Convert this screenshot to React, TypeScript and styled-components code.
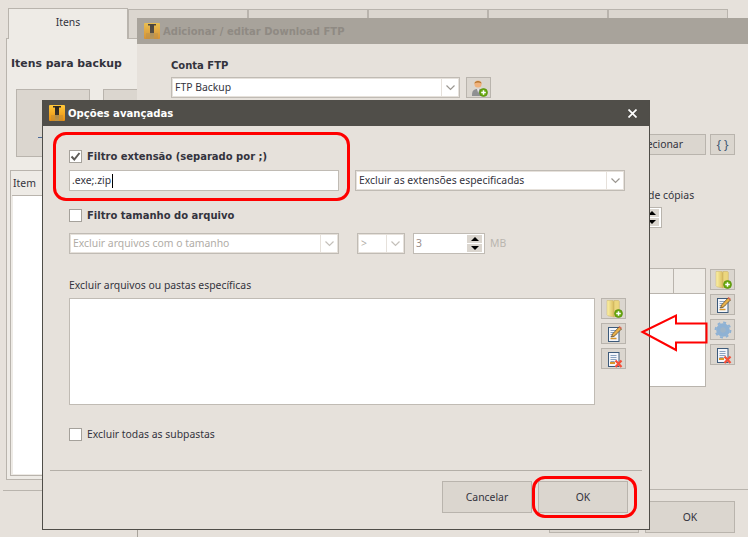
import styled, { createGlobalStyle } from "styled-components"

const GlobalStyle = createGlobalStyle`
html, body {
    margin: 0;
    padding: 0;
    background: #e6e1db;
    overflow: hidden;
}
* {
    box-sizing: border-box;
}
`

const border = "#b9b4ad"
const font = `"Noto Sans", sans-serif`
const boldFont = `"DejaVu Sans", sans-serif`
const textColor = "#33333d"

const AppIcon = ({ faded }: { faded?: boolean }) => (
    <svg width="16" height="16" viewBox="0 0 16 16" style={{ opacity: faded ? 0.75 : 1, flexShrink: 0 }}>
        <defs>
            <linearGradient id="appBg" x1="0" y1="0" x2="0" y2="1">
                <stop offset="0" stopColor="#ffc83a" />
                <stop offset="1" stopColor="#e88d10" />
            </linearGradient>
            <linearGradient id="appBar" x1="0" y1="0" x2="0" y2="1">
                <stop offset="0" stopColor="#2b2622" />
                <stop offset="0.55" stopColor="#3a332b" />
                <stop offset="0.6" stopColor="#a48a5c" />
                <stop offset="1" stopColor="#c49c4c" />
            </linearGradient>
        </defs>
        <rect width="16" height="16" rx="1" fill="url(#appBg)" />
        <rect x="4" y="1" width="8" height="1.5" fill="#2d2824" />
        <rect x="6" y="2" width="4" height="14" fill="url(#appBar)" />
        <rect x="2" y="10" width="12" height="6" fill="#b98a3a" opacity="0.45" />
    </svg>
)

const FolderAddIcon = () => (
    <svg width="18" height="18" viewBox="0 0 18 18">
        <defs>
            <linearGradient id="fold" x1="0" y1="0" x2="1" y2="0">
                <stop offset="0" stopColor="#fdf3a8" />
                <stop offset="1" stopColor="#d9bb5c" />
            </linearGradient>
        </defs>
        <path d="M2 0.5h6l1 1v15.5l-6-1.2-1-1z" fill="url(#fold)" stroke="#cdb66a" strokeWidth="0.5" />
        <path d="M9 0.5h4.5l0.8 1v13l-5.3 2.5z" fill="#ecd67e" stroke="#c7ad5f" strokeWidth="0.5" />
        <circle cx="13.5" cy="13.5" r="4" fill="#69a80f" stroke="#4f8a08" strokeWidth="0.6" />
        <path d="M13.5 11.2v4.6M11.2 13.5h4.6" stroke="#fff" strokeWidth="1.5" />
    </svg>
)

const DocLines = () => (
    <>
        <rect x="3.5" y="2.5" width="10.5" height="14" fill="#f4f6fa" stroke="#3d5a7a" />
        <path d="M5.5 5.5h6M5.5 7.500h6M5.5 9.500h6M5.5 11.500h4" stroke="#8aa2c0" />
    </>
)

const EditIcon = () => (
    <svg width="18" height="18" viewBox="0 0 18 18">
        <DocLines />
        <path d="M5.5 13.5h6" stroke="#d9962b" strokeWidth="1.5" />
        <path d="M6.500 12l1-3 6.500-7 2.500 2-7 7z" fill="#e8b04a" stroke="#5c4520" strokeWidth="0.7" />
        <path d="M14 1.500l2.500 2" stroke="#d86a5a" strokeWidth="1.6" />
    </svg>
)

const DeleteIcon = () => (
    <svg width="18" height="18" viewBox="0 0 18 18">
        <DocLines />
        <path d="M5 13h5" stroke="#d9962b" strokeWidth="2" />
        <path d="M10.500 10.500l6 6.500M16.500 10.500l-6 6.500" stroke="#f4503a" strokeWidth="2.2" />
    </svg>
)

const GearIcon = () => (
    <svg width="18" height="18" viewBox="0 0 18 18">
        <circle cx="9" cy="9" r="4.800" fill="#9db4c8" stroke="#8fb2d4" strokeWidth="4" />
        <circle cx="9" cy="9" r="7.400" fill="none" stroke="#8fb2d4" strokeWidth="2" strokeDasharray="2.900 2.900" />
    </svg>
)

const UserAddIcon = () => (
    <svg width="18" height="18" viewBox="0 0 18 18">
        <path d="M2 17c0-5 1-7 6-7s6 2 6 7z" fill="#8f9092" />
        <path d="M7 10h2.400l-1.200 4z" fill="#e8e8e8" />
        <circle cx="8" cy="5" r="3.600" fill="#f0b27c" />
        <path d="M4.500 4.500C4.500 1 11.500 1 11.500 4.500 9.500 3 6.500 3 4.500 4.500z" fill="#b4752f" />
        <circle cx="13.500" cy="13.500" r="4" fill="#69a80f" stroke="#4f8a08" strokeWidth="0.6" />
        <path d="M13.500 11.200v4.600M11.200 13.500h4.600" stroke="#fff" strokeWidth="1.5" />
    </svg>
)

const Chevron = ({ disabled }: { disabled?: boolean }) => (
    <svg width="9" height="6" viewBox="0 0 9 6">
        <path d="M0.500 0.500L4.500 4.500 8.500 0.500" fill="none" stroke={disabled ? "#c4c0ba" : "#9b9791"} strokeWidth="1.2" />
    </svg>
)

const Desktop = styled.div`
position: relative;
width: 748px;
height: 537px;
overflow: hidden;
background: #e6e1db;
font-family: ${font};
font-size: 10.4px;
line-height: 13px;
color: ${textColor};
`

/* janela principal, atras de tudo */
const MainWindow = styled.div`
position: absolute;
z-index: 0;
left: 0;
top: 0;
width: 748px;
height: 537px;
padding: 7px 0 0 6px;
`

const TabRow = styled.div`
display: flex;
align-items: flex-end;
height: 31px;
padding-left: 2px;
`

const Tab = styled.div<{ $active?: boolean }>`
width: 120px;
height: ${p => (p.$active ? 31 : 29)}px;
background: ${p => (p.$active ? "#eeebe6" : "#dbd6cf")};
border: 1px solid ${border};
border-bottom: none;
display: flex;
justify-content: center;
padding-top: 7px;
margin-bottom: ${p => (p.$active ? -1 : 0)}px;
position: relative;
z-index: ${p => (p.$active ? 1 : 0)};
`

const TabPane = styled.div`
width: 132px;
height: 442px;
background: #eeebe6;
border: 1px solid ${border};
padding: 18px 3px 0;
`

const PaneTitle = styled.div`
font-family: ${boldFont};
font-weight: bold;
font-size: 10.9px;
padding-left: 1px;
height: 15px;
`

const BigButtons = styled.div`
display: flex;
gap: 13px;
margin: 17px 0 0 6px;
`

const BigButton = styled.div`
width: 74px;
height: 68px;
flex-shrink: 0;
background: #dbd6cf;
border: 1px solid ${border};
`

const BigGlyph = styled.div`
width: 5px;
height: 1px;
margin: 47px 0 0 21px;
background: #4a6a9a;
`

const ItemTable = styled.div`
width: 120px;
height: 306px;
margin-top: 13px;
border: 1px solid ${border};
padding-left: 1px;
`

const ItemHead = styled.div`
height: 25px;
padding: 6px 1px;
border-bottom: 1px solid ${border};
`

const ItemBody = styled.div`
height: 278px;
background: #fff;
margin: 0 0 0 1px;
`

const MainFooterLine = styled.div`
width: 744px;
height: 1px;
margin: 10px 0 0 -3px;
background: ${border};
`

const FtpWindow = styled.div`
position: absolute;
z-index: 1;
left: 137px;
top: 18px;
width: 640px;
height: 530px;
background: #e6e1db;

&::before {
    content: "";
    position: absolute;
    left: 0;
    bottom: 0;
    width: 1px;
    height: 30px;
    background: #a8a39b;
}
`

const TitleBar = styled.div<{ $dark?: boolean }>`
height: 26px;
flex-shrink: 0;
display: flex;
align-items: center;
gap: 3px;
padding-left: ${p => (p.$dark ? 6 : 7)}px;
background: ${p => (p.$dark ? "#504e49" : "#a8a39b")};
color: ${p => (p.$dark ? "#fff" : "#8f8a83")};
font-family: ${boldFont};
font-weight: bold;
font-size: ${p => (p.$dark ? 10.1 : 10)}px;
position: relative;
`

const FtpBody = styled.div`
position: relative;
height: 504px;
padding: 15px 0 0 34px;
`

const FieldTitle = styled.div`
font-family: ${boldFont};
font-weight: bold;
font-size: 10px;
height: 13px;
margin-bottom: 5px;
`

const Row = styled.div<{ $gap?: number; $top?: number }>`
display: flex;
align-items: center;
gap: ${p => p.$gap ?? 6}px;
margin-top: ${p => p.$top ?? 0}px;
`

const Combo = styled.div<{ $w: number; $disabled?: boolean }>`
width: ${p => p.$w}px;
height: 21px;
flex-shrink: 0;
display: flex;
background: #fff;
border: 1px solid #c0bbb4;
outline: 1px solid #e6e1db;
outline-offset: -2px;
color: ${p => (p.$disabled ? "#b0aca6" : textColor)};
`

const ComboText = styled.div`
flex: 1;
display: flex;
align-items: center;
padding: 0 0 0 1px;
white-space: nowrap;
overflow: hidden;
margin: 2px 0 2px 2px;
background: #fff;
`

const ComboArrow = styled.div`
width: 18px;
display: flex;
align-items: center;
justify-content: center;
border-left: 1px solid #e6e1db;
`

const IconButton = styled.div`
width: 25px;
height: 21px;
flex-shrink: 0;
background: #dbd6cf;
border: 1px solid ${border};
display: flex;
align-items: center;
justify-content: center;
font-size: 12px;
color: #3e5873;
`

/* controles da direita que sobram atras do dialogo */
const RightColumn = styled.div`
position: absolute;
left: 573px;
top: 225px;
display: flex;
flex-direction: column;
gap: 4px;
`

const SelectRow = styled.div`
position: absolute;
left: 470px;
top: 90px;
display: flex;
gap: 4px;
`

const SelectButton = styled.div`
width: 99px;
height: 21px;
background: #dbd6cf;
border: 1px solid ${border};
display: flex;
align-items: center;
justify-content: flex-end;
padding: 0 22px 0 0;
`

const CopiesLabel = styled.div`
position: absolute;
left: 511px;
top: 145px;
white-space: nowrap;
`

const CopiesSpinner = styled.div`
position: absolute;
left: 499px;
top: 163px;
width: 26px;
height: 21px;
background: #fff;
border: 1px solid ${border};
display: flex;
justify-content: flex-end;
padding: 1px 2px 1px 0;
`

const SideTable = styled.div`
position: absolute;
left: 500px;
top: 224px;
width: 69px;
height: 119px;
border: 1px solid ${border};
background: #fff;
`

const SideTableHead = styled.div`
height: 25px;
background: #eeebe6;
border-bottom: 1px solid ${border};
display: flex;
justify-content: flex-end;
`

const SideHeadCell = styled.div`
width: 32px;
border-left: 1px solid ${border};
`

const FtpFooterLine = styled.div`
position: absolute;
left: 513px;
top: 445px;
right: 0;
height: 1px;
background: ${border};
`

const FtpButtons = styled.div`
position: absolute;
left: 412px;
top: 457px;
display: flex;
gap: 6px;
`

const PushButton = styled.div`
width: 90px;
height: 32px;
flex-shrink: 0;
background: #dbd6cf;
border: 1px solid ${border};
display: flex;
align-items: center;
justify-content: center;
`

/* dialogo "Opcoes avancadas" */
const Dialog = styled.div`
position: absolute;
z-index: 2;
left: 42px;
top: 100px;
width: 608px;
height: 430px;
background: #e6e1db;
border: 1px solid #4f4d48;
border-top: none;
display: flex;
flex-direction: column;
`

const CloseGlyph = styled.div`
position: absolute;
right: 12px;
top: 9px;
width: 9px;
height: 9px;
display: flex;
`

const DialogBody = styled.div`
flex: 1;
padding: 23px 0 0 26px;
display: flex;
flex-direction: column;
`

const CheckRow = styled.div<{ $bold?: boolean; $top?: number }>`
display: flex;
align-items: center;
gap: 5px;
height: 14px;
margin-top: ${p => p.$top ?? 0}px;
font-family: ${p => (p.$bold ? boldFont : font)};
font-size: ${p => (p.$bold ? 10 : 10.4)}px;
font-weight: ${p => (p.$bold ? "bold" : "normal")};
`

const CheckBox = styled.div`
width: 13px;
height: 13px;
flex-shrink: 0;
background: #fff;
border: 1px solid #a5a19b;
display: flex;
align-items: center;
justify-content: center;
`

const TextField = styled.div`
width: 270px;
height: 21px;
flex-shrink: 0;
background: #fff;
border: 1px solid #c0bbb4;
display: flex;
align-items: center;
padding: 0 0 0 2px;
`

const Caret = styled.span`
display: inline-block;
width: 1px;
height: 14px;
background: #000;
margin-left: 1px;
`

const SpinBox = styled.div`
width: 72px;
height: 21px;
flex-shrink: 0;
background: #fff;
border: 1px solid #c0bbb4;
display: flex;
align-items: center;
justify-content: space-between;
padding: 1px 2px 1px 2px;
color: #9a8e8a;
`

const SpinButtons = styled.div`
width: 15px;
height: 100%;
display: flex;
flex-direction: column;
gap: 1px;
`

const SpinStep = styled.div`
flex: 1;
background: #dbd6cf;
display: flex;
align-items: center;
justify-content: center;
`

const SpinTriangle = styled.div<{ $down?: boolean }>`
width: 0;
height: 0;
border-left: 4px solid transparent;
border-right: 4px solid transparent;
${p => (p.$down ? "border-top: 4px solid #000;" : "border-bottom: 4px solid #000;")}
`

const MutedLabel = styled.span`
color: #b9b5af;
`

const ListLabel = styled.div`
margin-top: 25px;
height: 13px;
`

const ListRow = styled.div`
display: flex;
gap: 6px;
margin-top: 6px;
`

const ListBox = styled.div`
width: 526px;
height: 107px;
background: #fff;
border: 1px solid #c0bbb4;
`

const ListButtons = styled.div`
display: flex;
flex-direction: column;
gap: 4px;
`

const DialogFooter = styled.div`
margin: 0 7px;
height: 59px;
border-top: 1px solid #b4afa8;
display: flex;
justify-content: flex-end;
gap: 6px;
padding: 10px 14px 0 0;
`

const Annotation = styled.div<{ $l: number; $t: number; $w: number; $h: number }>`
position: absolute;
z-index: 3;
left: ${p => p.$l}px;
top: ${p => p.$t}px;
width: ${p => p.$w}px;
height: ${p => p.$h}px;
border: 3px solid #f00;
border-radius: 13px;
`

const ArrowOverlay = styled.svg`
position: absolute;
z-index: 3;
left: 640px;
top: 313px;
`

const App = () => {
    return (
        <Desktop>
            <GlobalStyle />
            <MainWindow>
                <TabRow>
                    <Tab $active>Itens</Tab>
                    <Tab />
                    <Tab />
                    <Tab />
                    <Tab />
                    <Tab />
                </TabRow>
                <TabPane>
                    <PaneTitle>Itens para backup</PaneTitle>
                    <BigButtons>
                        <BigButton>
                            <BigGlyph />
                        </BigButton>
                        <BigButton />
                    </BigButtons>
                    <ItemTable>
                        <ItemHead>Item</ItemHead>
                        <ItemBody />
                    </ItemTable>
                </TabPane>
                <MainFooterLine />
            </MainWindow>

            <FtpWindow>
                <TitleBar>
                    <AppIcon faded />
                    Adicionar / editar Download FTP
                </TitleBar>
                <FtpBody>
                    <FieldTitle>Conta FTP</FieldTitle>
                    <Row>
                        <Combo $w={289}>
                            <ComboText>FTP Backup</ComboText>
                            <ComboArrow>
                                <Chevron />
                            </ComboArrow>
                        </Combo>
                        <IconButton>
                            <UserAddIcon />
                        </IconButton>
                    </Row>
                    <SelectRow>
                        <SelectButton>Selecionar</SelectButton>
                        <IconButton>{"{ }"}</IconButton>
                    </SelectRow>
                    <CopiesLabel>de cópias</CopiesLabel>
                    <CopiesSpinner>
                        <SpinButtons>
                            <SpinStep>
                                <SpinTriangle />
                            </SpinStep>
                            <SpinStep>
                                <SpinTriangle $down />
                            </SpinStep>
                        </SpinButtons>
                    </CopiesSpinner>
                    <SideTable>
                        <SideTableHead>
                            <SideHeadCell />
                        </SideTableHead>
                    </SideTable>
                    <RightColumn>
                        <IconButton>
                            <FolderAddIcon />
                        </IconButton>
                        <IconButton>
                            <EditIcon />
                        </IconButton>
                        <IconButton>
                            <GearIcon />
                        </IconButton>
                        <IconButton>
                            <DeleteIcon />
                        </IconButton>
                    </RightColumn>
                    <FtpFooterLine />
                    <FtpButtons>
                        <PushButton>Cancelar</PushButton>
                        <PushButton>OK</PushButton>
                    </FtpButtons>
                </FtpBody>
            </FtpWindow>

            <Dialog>
                <TitleBar $dark>
                    <AppIcon />
                    Opções avançadas
                    <CloseGlyph>
                        <svg width="9" height="9" viewBox="0 0 9 9">
                            <path d="M0.500 0.500l8 8M8.500 0.500l-8 8" stroke="#fff" strokeWidth="1.700" />
                        </svg>
                    </CloseGlyph>
                </TitleBar>
                <DialogBody>
                    <CheckRow $bold>
                        <CheckBox>
                            <svg width="11" height="11" viewBox="0 0 11 11">
                                <path d="M1.500 5.500l2.800 3 5.200-6.500" fill="none" stroke="#5d5b57" strokeWidth="2" />
                            </svg>
                        </CheckBox>
                        Filtro extensão (separado por ;)
                    </CheckRow>
                    <Row $gap={16} $top={7}>
                        <TextField>
                            .exe;.zip
                            <Caret />
                        </TextField>
                        <Combo $w={270}>
                            <ComboText>Excluir as extensões especificadas</ComboText>
                            <ComboArrow>
                                <Chevron />
                            </ComboArrow>
                        </Combo>
                    </Row>
                    <CheckRow $bold $top={17}>
                        <CheckBox />
                        Filtro tamanho do arquivo
                    </CheckRow>
                    <Row $gap={18} $top={11}>
                        <Combo $w={270} $disabled>
                            <ComboText>Excluir arquivos com o tamanho</ComboText>
                            <ComboArrow>
                                <Chevron disabled />
                            </ComboArrow>
                        </Combo>
                        <Row $gap={8}>
                            <Combo $w={48} $disabled>
                                <ComboText>&gt;</ComboText>
                                <ComboArrow>
                                    <Chevron disabled />
                                </ComboArrow>
                            </Combo>
                            <Row $gap={5}>
                                <SpinBox>
                                    3
                                    <SpinButtons>
                                        <SpinStep>
                                            <SpinTriangle />
                                        </SpinStep>
                                        <SpinStep>
                                            <SpinTriangle $down />
                                        </SpinStep>
                                    </SpinButtons>
                                </SpinBox>
                                <MutedLabel>MB</MutedLabel>
                            </Row>
                        </Row>
                    </Row>
                    <ListLabel>Excluir arquivos ou pastas específicas</ListLabel>
                    <ListRow>
                        <ListBox />
                        <ListButtons>
                            <IconButton>
                                <FolderAddIcon />
                            </IconButton>
                            <IconButton>
                                <EditIcon />
                            </IconButton>
                            <IconButton>
                                <DeleteIcon />
                            </IconButton>
                        </ListButtons>
                    </ListRow>
                    <CheckRow $top={22}>
                        <CheckBox />
                        Excluir todas as subpastas
                    </CheckRow>
                </DialogBody>
                <DialogFooter>
                    <PushButton>Cancelar</PushButton>
                    <PushButton>OK</PushButton>
                </DialogFooter>
            </Dialog>

            <Annotation $l={53} $t={132} $w={297} $h={69} />
            <Annotation $l={532} $t={476} $w={105} $h={42} />
            <ArrowOverlay width="70" height="40" viewBox="0 0 70 40">
                <path d="M2.500 19L36 2.500V10.500H66.500V29.500H36V37z" fill="none" stroke="#f00" strokeWidth="2" />
            </ArrowOverlay>
        </Desktop>
    )
}

export default App
